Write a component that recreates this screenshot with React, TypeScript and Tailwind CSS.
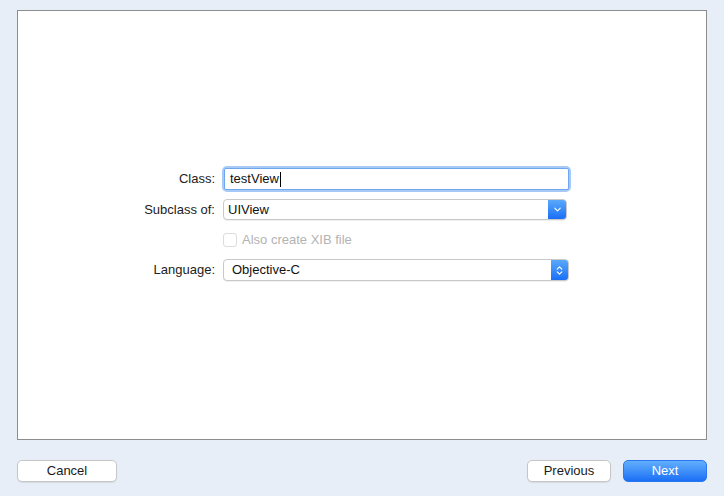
import { ChevronDown, ChevronsUpDown } from 'lucide-react'

const font = { fontFamily: '"Liberation Sans", Arial, sans-serif' }

function Label({ text }: { text: string }) {
  return <div className="w-[120px] text-right text-[13px] text-[#222] pr-0">{text}</div>
}

export default function App() {
  return (
    <div className="w-[724px] h-[496px] bg-[#e8eef7] flex flex-col overflow-hidden" style={font}>
      <div className="mx-[17px] mt-[10px] h-[430px] bg-white border border-[#8d8d8d] pt-[155px] pl-[77px]">
        <div className="flex flex-col">
          {/* Class */}
          <div className="flex items-center h-[26px] gap-[4px]">
            <Label text="Class:" />
            <div className="ml-[3px] w-[349px] h-[26px] rounded-[5px] bg-[#a6c9f5] p-[2px]">
              <div className="h-full bg-white border border-[#6ea7ee] rounded-[2px] flex items-center pl-[5px] text-[13px] text-[#111]">
                testView<span className="inline-block w-px h-[15px] bg-black ml-px" />
              </div>
            </div>
          </div>

          {/* Subclass */}
          <div className="flex items-center h-[21px] gap-[8px] mt-[7px]">
            <Label text="Subclass of:" />
            <div className="w-[344px] h-[21px] flex border border-[#c9c9c9] rounded-[4px] bg-white overflow-hidden shadow-[0_1px_0_rgba(0,0,0,0.06)]">
              <div className="flex-1 flex items-center pl-[4px] text-[13px] text-[#111]">UIView</div>
              <div className="w-[18px] bg-gradient-to-b from-[#5aa8fb] to-[#1a6ef5] flex items-center justify-center">
                <ChevronDown className="w-[11px] h-[11px] text-white" strokeWidth={2.5} />
              </div>
            </div>
          </div>

          {/* Checkbox */}
          <div className="flex items-center h-[14px] mt-[13px] pl-[128px] gap-[5px]">
            <div className="w-[14px] h-[14px] border border-[#dcdcdc] rounded-[3px] bg-white" />
            <span className="text-[13px] text-[#b3b3b3]">Also create XIB file</span>
          </div>

          {/* Language */}
          <div className="flex items-center h-[22px] gap-[8px] mt-[12px]">
            <Label text="Language:" />
            <div className="w-[346px] h-[22px] flex border border-[#c9c9c9] rounded-[4px] bg-white overflow-hidden shadow-[0_1px_0_rgba(0,0,0,0.06)]">
              <div className="flex-1 flex items-center pl-[8px] text-[13px] text-[#111]">Objective-C</div>
              <div className="w-[17px] bg-gradient-to-b from-[#5aa8fb] to-[#1a6ef5] flex items-center justify-center">
                <ChevronsUpDown className="w-[11px] h-[13px] text-white" strokeWidth={2.5} />
              </div>
            </div>
          </div>
        </div>
      </div>

      <div className="flex items-center mt-[20px] px-[17px]">
        <button className="w-[100px] h-[22px] rounded-[5px] bg-white border border-[#c6c6c6] shadow-[0_1px_1px_rgba(0,0,0,0.08)] text-[13px] text-[#1a1a1a]">
          Cancel
        </button>
        <div className="flex-1" />
        <button className="w-[84px] h-[22px] rounded-[5px] bg-white border border-[#c6c6c6] shadow-[0_1px_1px_rgba(0,0,0,0.08)] text-[13px] text-[#1a1a1a]">
          Previous
        </button>
        <button className="ml-[12px] w-[84px] h-[22px] rounded-[5px] bg-gradient-to-b from-[#62aefc] to-[#1b6ff5] border border-[#2a77f0] text-[13px] text-white">
          Next
        </button>
      </div>
    </div>
  )
}
